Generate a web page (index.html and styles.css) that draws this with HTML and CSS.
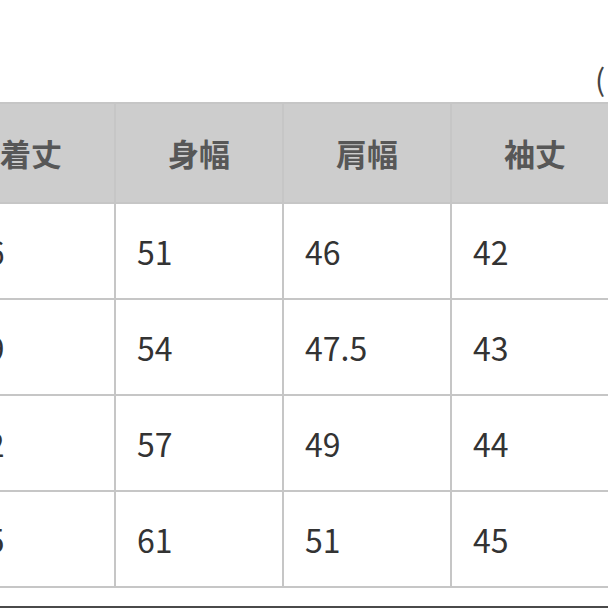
FILE: index.html
```html
<!DOCTYPE html>
<html lang="ja">
<head>
<meta charset="utf-8">
<link rel="stylesheet" href="styles.css">
</head>
<body>
<div class="page">
  <div class="caption"><span class="paren">(</span>単位：cm)</div>
  <table class="size-table">
    <colgroup>
      <col class="c"><col class="c"><col class="c"><col class="c"><col class="c">
    </colgroup>
    <thead>
      <tr><th>着丈</th><th>身幅</th><th>肩幅</th><th>袖丈</th><th>裄丈</th></tr>
    </thead>
    <tbody>
      <tr><td>66</td><td>51</td><td>46</td><td>42</td><td>82</td></tr>
      <tr><td>69</td><td>54</td><td>47.5</td><td>43</td><td>85</td></tr>
      <tr><td>72</td><td>57</td><td>49</td><td>44</td><td>88</td></tr>
      <tr><td>75</td><td>61</td><td>51</td><td>45</td><td>91</td></tr>
    </tbody>
  </table>
  <div class="footer-line"></div>
</div>
</body>
</html>
```
FILE: styles.css
```css
html, body {
  margin: 0;
  padding: 0;
  background: #ffffff;
}
.page {
  width: 608px;
  height: 608px;
  overflow: hidden;
  position: relative;
  font-family: "Noto Sans CJK JP", "Noto Sans", sans-serif;
}
.caption {
  height: 102px;
  box-sizing: border-box;
  padding-left: 595px;
  padding-top: 60px;
  font-size: 30px;
  line-height: 36px;
  color: #444;
  white-space: nowrap;
}
.caption .paren {
  margin-right: 8px;
}
.size-table {
  margin-left: -54px;
  border-collapse: collapse;
  table-layout: fixed;
  width: 840px;
}
.size-table col.c {
  width: 168px;
}
.size-table th,
.size-table td {
  border: 2px solid #c6c6c6;
  padding: 0;
}
.size-table th {
  background: #cdcdcd;
  color: #575757;
  font-weight: 700;
  font-size: 31px;
  text-align: center;
  height: 98px;
  line-height: 40px;
}
.size-table td {
  background: #ffffff;
  color: #333333;
  font-weight: 400;
  font-size: 32px;
  text-align: left;
  padding-left: 21px;
  height: 94px;
  line-height: 40px;
}
.footer-line {
  position: absolute;
  left: 0;
  right: 0;
  top: 606px;
  height: 2px;
  background: #4a4a4a;
}
```
